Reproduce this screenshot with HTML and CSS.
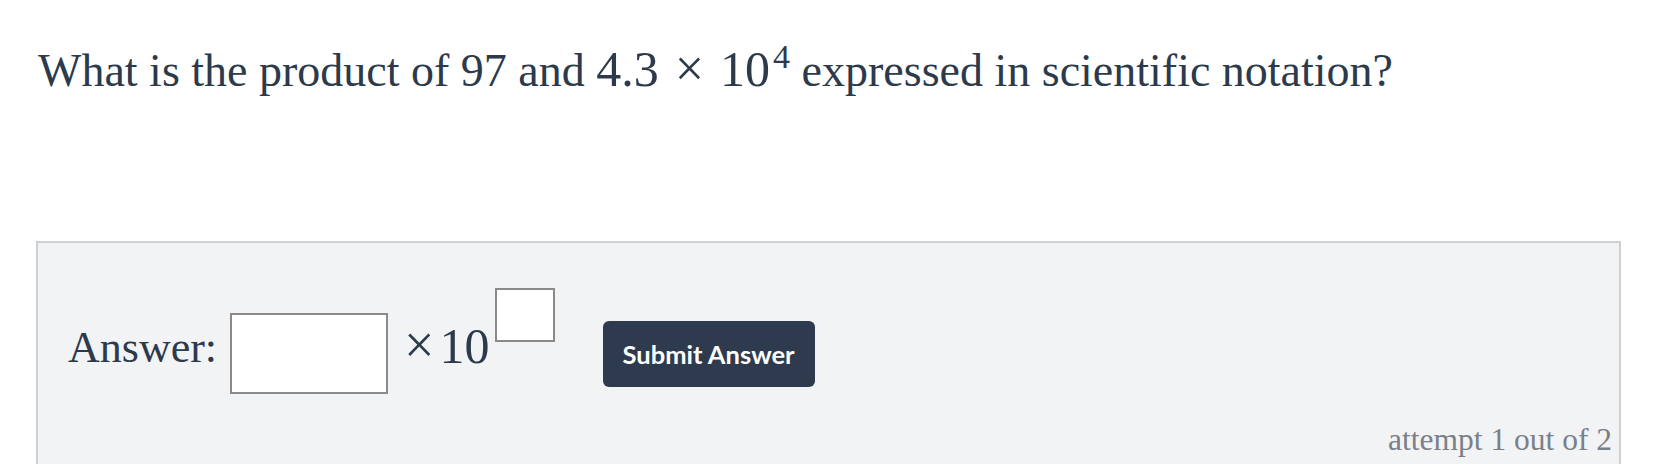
FILE: index.html
```html
<!DOCTYPE html>
<html>
<head>
<meta charset="utf-8">
<link rel="stylesheet" href="styles.css">
</head>
<body>
<div class="page">
  <p class="question">What is the product of 97 and <span class="math"><span class="num">4.3</span><span class="times">×</span><span class="num">10</span><span class="sup">4</span></span> expressed in scientific notation?</p>
  <div class="answer-box">
    <div class="answer-row">
      <span class="label">Answer:</span>
      <span class="input-main"></span>
      <span class="mult"><span class="x">×</span><span class="ten">10</span></span>
      <span class="input-exp"></span>
      <button class="submit">Submit Answer</button>
    </div>
    <div class="attempts">attempt 1 out of 2</div>
  </div>
</div>
</body>
</html>
```
FILE: styles.css
```css
html, body {
  margin: 0;
  padding: 0;
  background: #ffffff;
  overflow: hidden;
}

.page {
  padding-left: 36px;
  width: 1585px;
  color: #2c3a4c;
  font-family: "Liberation Serif", "Times New Roman", serif;
}

.question {
  margin: 0;
  padding: 40px 0 0 2px;
  font-size: 46px;
  line-height: 60px;
  white-space: nowrap;
}

.math {
  line-height: 1;
  font-size: 50px;
}

.math .times {
  font-size: 52px;
  line-height: 0;
  margin: 0 16px 0 16px;
}

.math .sup {
  font-size: 34px;
  vertical-align: 18px;
  margin-left: 3px;
}

.answer-box {
  margin-top: 140px;
  background: #f2f3f5;
  border: 2px solid #cfd0d4;
  border-bottom: none;
  padding: 45px 0 0 30px;
  height: 224px;
  box-sizing: border-box;
}

.answer-row {
  display: flex;
  align-items: flex-start;
}

.label {
  font-size: 44px;
  line-height: 50px;
  margin-top: 35px;
}

.input-main {
  display: block;
  width: 158px;
  height: 81px;
  box-sizing: border-box;
  background: #ffffff;
  border: 2px solid #8a8a8a;
  margin: 25px 0 0 13px;
}

.mult {
  font-size: 50px;
  line-height: 55px;
  margin: 31px 0 0 16px;
}

.mult .x {
  font-size: 54px;
  line-height: 0;
}

.mult .ten {
  margin-left: 5px;
}

.input-exp {
  display: block;
  width: 60px;
  height: 54px;
  box-sizing: border-box;
  background: #ffffff;
  border: 2px solid #8a8a8a;
  margin-left: 5px;
}

.submit {
  margin: 33px 0 0 48px;
  width: 212px;
  height: 66px;
  border: none;
  border-radius: 6px;
  background: #2e3b4e;
  color: #ffffff;
  font-family: Lato, "Noto Sans", sans-serif;
  font-weight: 700;
  font-size: 25.5px;
  padding: 0;
}

.attempts {
  margin-top: 28px;
  text-align: right;
  padding-right: 7px;
  font-size: 31.5px;
  line-height: 36px;
  color: #7b8088;
}
```
